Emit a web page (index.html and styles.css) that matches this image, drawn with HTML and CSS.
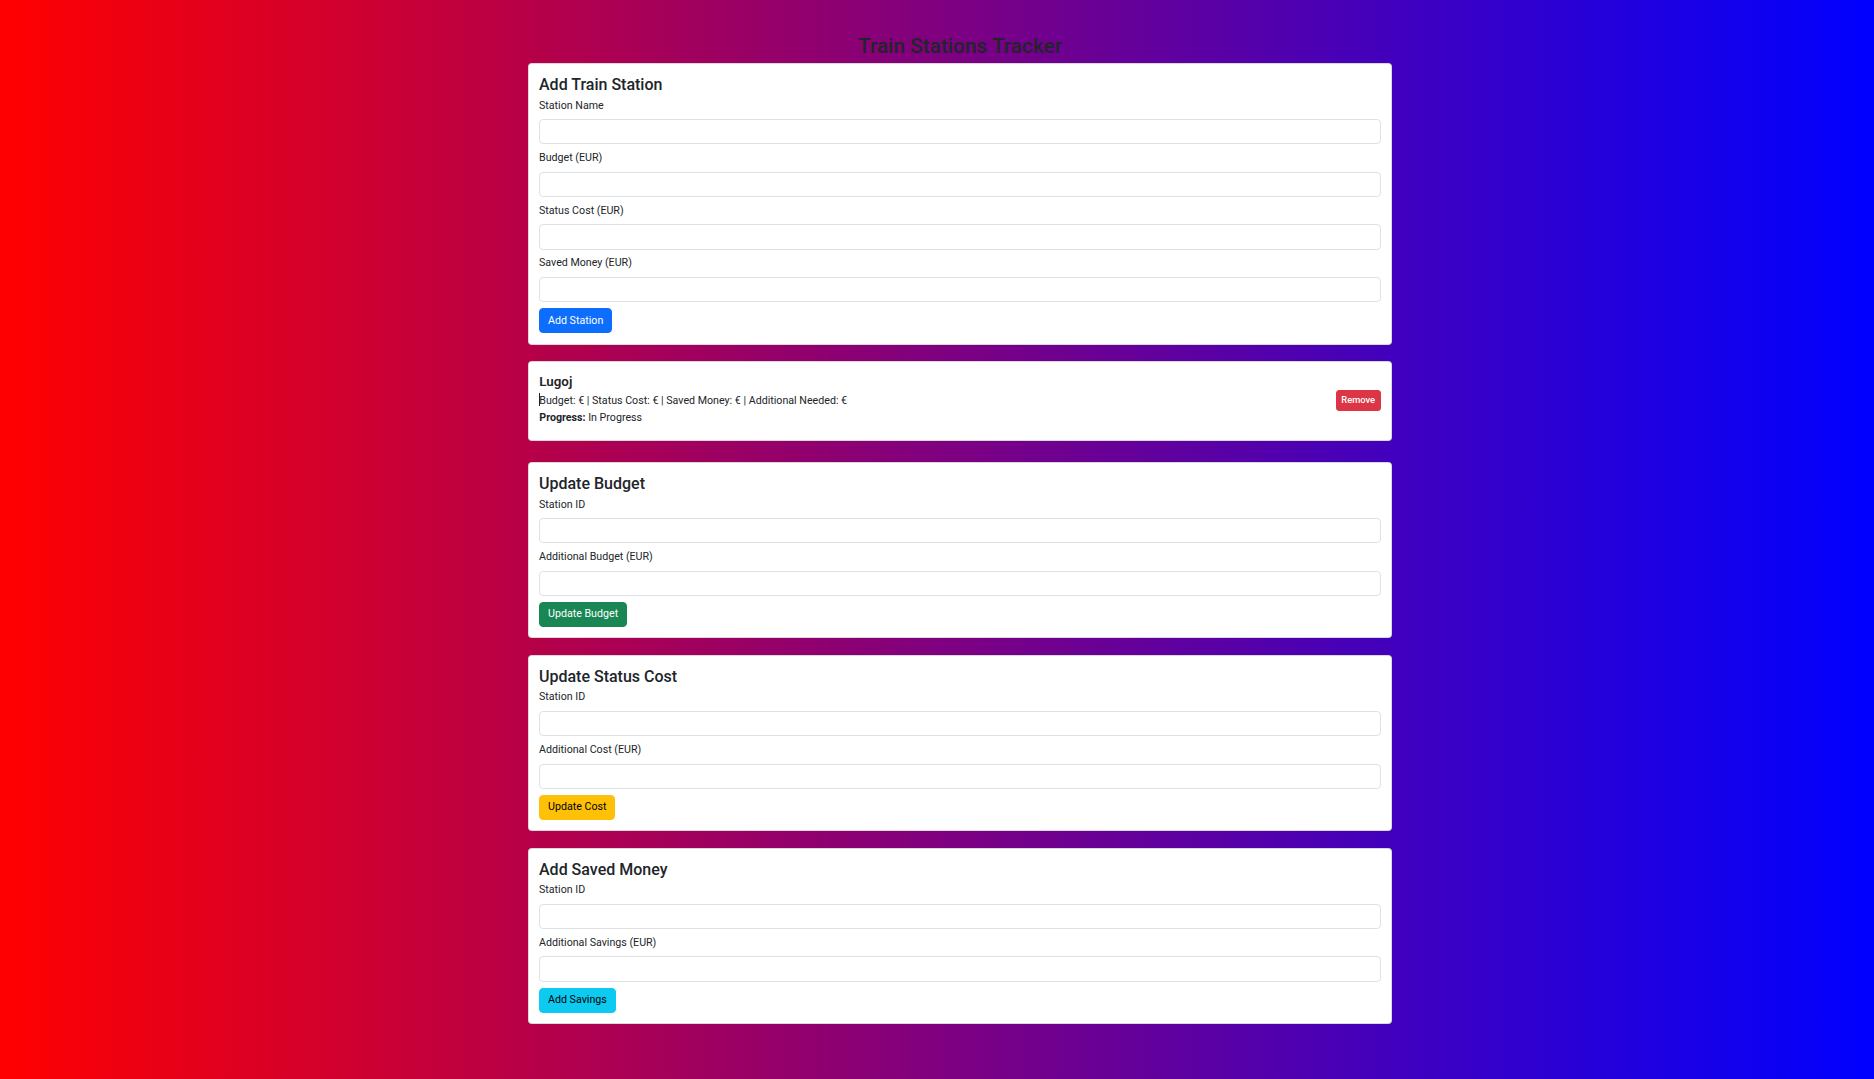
FILE: index.html
```html
<!DOCTYPE html>
<html lang="en">
<head>
<meta charset="utf-8">
<title>Train Stations Tracker</title>
<link rel="stylesheet" href="styles.css">
</head>
<body>
<div class="page">
  <h2 class="title">Train Stations Tracker</h2>

  <div class="card form-card">
    <h4 class="card-heading">Add Train Station</h4>
    <div class="field"><label>Station Name</label><input type="text"></div>
    <div class="field"><label>Budget (EUR)</label><input type="text"></div>
    <div class="field"><label>Status Cost (EUR)</label><input type="text"></div>
    <div class="field"><label>Saved Money (EUR)</label><input type="text"></div>
    <button class="btn btn-primary">Add Station</button>
  </div>

  <div class="card station">
    <div class="station-info">
      <h5 class="station-name">Lugoj</h5>
      <p class="station-detail"><span class="caret"></span>Budget: € | Status Cost: € | Saved Money: € | Additional Needed: €</p>
      <p class="station-detail station-progress"><strong>Progress:</strong> In Progress</p>
    </div>
    <button class="btn btn-sm btn-danger">Remove</button>
  </div>

  <div class="card form-card">
    <h4 class="card-heading">Update Budget</h4>
    <div class="field"><label>Station ID</label><input type="text"></div>
    <div class="field"><label>Additional Budget (EUR)</label><input type="text"></div>
    <button class="btn btn-success">Update Budget</button>
  </div>

  <div class="card form-card">
    <h4 class="card-heading">Update Status Cost</h4>
    <div class="field"><label>Station ID</label><input type="text"></div>
    <div class="field"><label>Additional Cost (EUR)</label><input type="text"></div>
    <button class="btn btn-warning">Update Cost</button>
  </div>

  <div class="card form-card">
    <h4 class="card-heading">Add Saved Money</h4>
    <div class="field"><label>Station ID</label><input type="text"></div>
    <div class="field"><label>Additional Savings (EUR)</label><input type="text"></div>
    <button class="btn btn-info">Add Savings</button>
  </div>
</div>
</body>
</html>
```
FILE: styles.css
```css
html {
  min-height: 100%;
  background: linear-gradient(to right, #ff0000, #0000ff);
}

body {
  margin: 0;
  font-family: Roboto, "Liberation Sans", Arial, sans-serif;
  color: #212529;
}

.page {
  width: 864px;
  margin-left: 528px;
  padding-top: 32.7px;
}

.title {
  margin: 0 0 4.3px;
  font-size: 20.8px;
  line-height: 26px;
  font-weight: 500;
  text-align: center;
  color: #212529;
}

.card {
  box-sizing: border-box;
  background: #fff;
  border: 1px solid rgba(0, 0, 0, 0.15);
  border-radius: 4px;
  margin-bottom: 16.5px;
}

.form-card {
  padding: 11.3px 10px 10.2px;
}

.card-heading {
  margin: 0 0 3.3px;
  font-size: 16px;
  line-height: 19px;
  font-weight: 500;
}

.field {
  display: flex;
  flex-direction: column;
  margin-bottom: 5.8px;
}

.field label {
  font-size: 10.67px;
  line-height: 16px;
  margin-bottom: 5.5px;
}

.field input {
  box-sizing: border-box;
  height: 25.33px;
  border: 1px solid #dee2e6;
  border-radius: 4px;
  padding: 0 8px;
  font: inherit;
  font-size: 10.67px;
  background: #fff;
}

.btn {
  display: inline-block;
  font-family: inherit;
  font-size: 10.67px;
  line-height: 16px;
  padding: 3.67px 8px;
  border: 1px solid transparent;
  border-radius: 4px;
  cursor: pointer;
}

.btn-primary { background: #0d6efd; border-color: #0d6efd; color: #fff; }
.btn-success { background: #198754; border-color: #198754; color: #fff; }
.btn-warning { background: #ffc107; border-color: #ffc107; color: #000; }
.btn-info { background: #0dcaf0; border-color: #0dcaf0; color: #000; }
.btn-danger { background: #dc3545; border-color: #dc3545; color: #fff; }

.btn-sm {
  font-size: 9.33px;
  line-height: 14px;
  padding: 2.67px 4.6px;
  border-radius: 3px;
  font-weight: 500;
}

.station {
  display: flex;
  justify-content: space-between;
  align-items: center;
  padding: 12.1px 10.3px 13.4px;
  margin-bottom: 21.4px;
}

.station-name {
  margin: 0 0 2.65px;
  font-size: 13.33px;
  line-height: 16px;
  font-weight: 600;
}

.station-detail {
  margin: 0;
  font-size: 10.67px;
  line-height: 16px;
}

.station-progress {
  margin-top: 1.4px;
}

.station-progress strong {
  font-weight: 700;
}

.caret {
  display: inline-block;
  width: 0;
  height: 13.5px;
  border-left: 1px solid #222;
  vertical-align: top;
  margin-right: -1px;
}
```
